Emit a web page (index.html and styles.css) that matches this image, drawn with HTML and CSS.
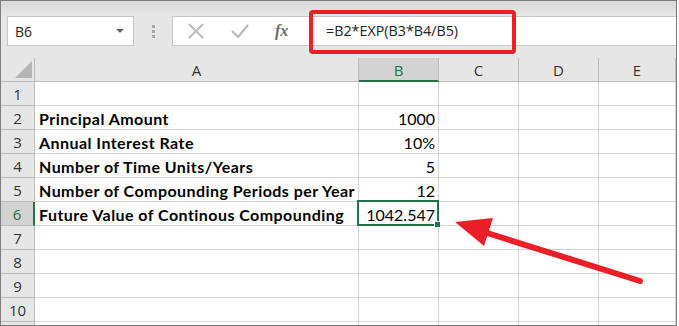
FILE: index.html
```html
<!DOCTYPE html>
<html>
<head>
  <title>Continuous Compounding</title>
  <meta name="viewport" content="width=device-width, initial-scale=1">
  <link rel="stylesheet" href="styles.css">
</head>
<body>
  <div class="frame">
    <!-- name box + formula bar -->
    <div class="toolbar">
      <div class="name-box">
        <span>B6</span>
        <span class="drop"></span>
      </div>
      <div class="grip"><i></i><i></i><i></i></div>
      <div class="buttons">
        <svg class="btn" width="20" height="20" viewBox="0 0 20 20"><path d="M3 3 L17 17 M17 3 L3 17" stroke="#bdbdbd" stroke-width="2" fill="none"/></svg>
        <svg class="btn" width="20" height="20" viewBox="0 0 20 20"><path d="M2 10 L8 16 L18 4" stroke="#bdbdbd" stroke-width="2.4" fill="none"/></svg>
        <span class="fx">fx</span>
      </div>
      <div class="formula">=B2*EXP(B3*B4/B5)</div>
      <div class="highlight"></div>
    </div>

    <!-- worksheet -->
    <div class="sheet">
      <div class="corner"><span class="tri"></span></div>
      <div class="col-head">A</div>
      <div class="col-head active">B</div>
      <div class="col-head">C</div>
      <div class="col-head">D</div>
      <div class="col-head">E</div>

      <div class="row-head">1</div><div class="cell"></div><div class="cell"></div><div class="cell"></div><div class="cell"></div><div class="cell"></div>
      <div class="row-head">2</div><div class="cell label">Principal Amount</div><div class="cell num">1000</div><div class="cell"></div><div class="cell"></div><div class="cell"></div>
      <div class="row-head">3</div><div class="cell label">Annual Interest Rate</div><div class="cell num">10%</div><div class="cell"></div><div class="cell"></div><div class="cell"></div>
      <div class="row-head">4</div><div class="cell label">Number of Time Units/Years</div><div class="cell num">5</div><div class="cell"></div><div class="cell"></div><div class="cell"></div>
      <div class="row-head">5</div><div class="cell label">Number of Compounding Periods per Year</div><div class="cell num">12</div><div class="cell"></div><div class="cell"></div><div class="cell"></div>
      <div class="row-head active">6</div><div class="cell label">Future Value of Continous Compounding</div><div class="cell num selected">1042.547<span class="sel-box"><span class="handle"></span></span></div><div class="cell"></div><div class="cell"></div><div class="cell"></div>
      <div class="row-head">7</div><div class="cell"></div><div class="cell"></div><div class="cell"></div><div class="cell"></div><div class="cell"></div>
      <div class="row-head">8</div><div class="cell"></div><div class="cell"></div><div class="cell"></div><div class="cell"></div><div class="cell"></div>
      <div class="row-head">9</div><div class="cell"></div><div class="cell"></div><div class="cell"></div><div class="cell"></div><div class="cell"></div>
      <div class="row-head">10</div><div class="cell"></div><div class="cell"></div><div class="cell"></div><div class="cell"></div><div class="cell"></div>
      <div class="row-head"></div><div class="cell"></div><div class="cell"></div><div class="cell"></div><div class="cell"></div><div class="cell"></div>
    </div>

    <!-- annotation arrow -->
    <svg class="arrow" width="679" height="326" viewBox="0 0 679 326">
      <line x1="640" y1="281" x2="484" y2="232" stroke="#ea1f27" stroke-width="6" stroke-linecap="round"/>
      <polygon points="455,222 493,218 484,246" fill="#ea1f27"/>
    </svg>
  </div>
</body>
</html>
```

FILE: styles.css
```css
/* page */
body {
  margin: 0;
  background: #fff;
}

.frame {
  position: relative;
  width: 677px;
  height: 326px;
  box-sizing: border-box;
  border: 1px solid #7d7d7d;
  overflow: hidden;
  background: #fff;
}

/* toolbar with name box and formula bar */
.toolbar {
  position: relative;
  height: 57px;
  box-sizing: border-box;
  padding: 15px 0 0 6px;
  display: flex;
  align-items: flex-start;
  background: linear-gradient(#d9d9d9, #e6e6e6 25%, #e6e6e6);
}

.name-box {
  width: 127px;
  height: 30px;
  box-sizing: border-box;
  border: 1px solid #c6c6c6;
  background: #fff;
  display: flex;
  align-items: center;
  justify-content: space-between;
  padding: 0 9px 0 7px;
  font-family: "Open Sans", sans-serif;
  font-size: 14px;
  color: #222;
}

.drop {
  width: 0;
  height: 0;
  border-left: 4px solid transparent;
  border-right: 4px solid transparent;
  border-top: 4px solid #666;
}

.grip {
  width: 38px;
  height: 30px;
  display: flex;
  flex-direction: column;
  align-items: center;
  justify-content: center;
  gap: 2px;
}

.grip i {
  width: 3px;
  height: 3px;
  background: #a9a9a9;
}

.buttons {
  width: 137px;
  height: 30px;
  box-sizing: border-box;
  border: 1px solid #c6c6c6;
  border-right: none;
  background: #fff;
  display: flex;
  align-items: center;
  padding-left: 13px;
  gap: 24px;
}

.fx {
  font-family: "Liberation Serif", serif;
  font-style: italic;
  font-weight: bold;
  font-size: 16px;
  color: #6b6b6b;
  margin-left: 1px;
}

.formula {
  flex: 1;
  height: 30px;
  box-sizing: border-box;
  border-top: 1px solid #c6c6c6;
  border-bottom: 1px solid #c6c6c6;
  border-left: 1px solid #c6c6c6;
  background: #fff;
  padding-left: 16px;
  line-height: 27px;
  font-family: "Open Sans", sans-serif;
  font-size: 14.3px;
  color: #222;
}

.highlight {
  position: absolute;
  left: 308px;
  top: 9px;
  width: 207px;
  height: 44px;
  box-sizing: border-box;
  border: 4px solid #ea1f27;
  border-radius: 4px;
}

/* worksheet grid */
.sheet {
  display: grid;
  grid-template-columns: 34px 324px 80px 80px 80px 1fr;
  grid-auto-rows: 24px;
  font-family: Lato, "Liberation Sans", sans-serif;
  font-size: 16px;
  color: #000;
}

.corner,
.col-head,
.row-head {
  background: #e6e6e6;
  border-right: 1px solid #bcbcbc;
  border-bottom: 1px solid #bcbcbc;
  box-sizing: border-box;
  color: #333;
}

.corner {
  position: relative;
}

.tri {
  position: absolute;
  right: 2px;
  bottom: 3px;
  width: 0;
  height: 0;
  border-left: 17px solid transparent;
  border-bottom: 17px solid #b5b5b5;
}

.col-head {
  text-align: center;
  line-height: 24px;
  font-family: "Open Sans", sans-serif;
  font-size: 15px;
}

.col-head.active {
  background: #d3d3d3;
  color: #217346;
  border-bottom: 2px solid #217346;
}

.row-head {
  text-align: center;
  line-height: 25px;
  font-family: "Open Sans", sans-serif;
  font-size: 15px;
}

.row-head.active {
  background: #d3d3d3;
  color: #217346;
  border-right: 2px solid #217346;
}

.cell {
  border-right: 1px solid #d4d4d4;
  border-bottom: 1px solid #d4d4d4;
  box-sizing: border-box;
  line-height: 26px;
  white-space: nowrap;
  overflow: visible;
}

.label {
  font-weight: bold;
  padding-left: 4px;
  letter-spacing: 0.45px;
}

.num {
  text-align: right;
  padding-right: 3px;
}

.selected {
  position: relative;
}

.sel-box {
  position: absolute;
  left: -2px;
  top: -2px;
  right: -1px;
  bottom: -1px;
  border: 2px solid #217346;
}

.handle {
  position: absolute;
  right: -4px;
  bottom: -4px;
  width: 5px;
  height: 5px;
  background: #217346;
  border: 1px solid #fff;
}

/* arrow overlay */
.arrow {
  position: absolute;
  left: -1px;
  top: -1px;
  pointer-events: none;
}
```
